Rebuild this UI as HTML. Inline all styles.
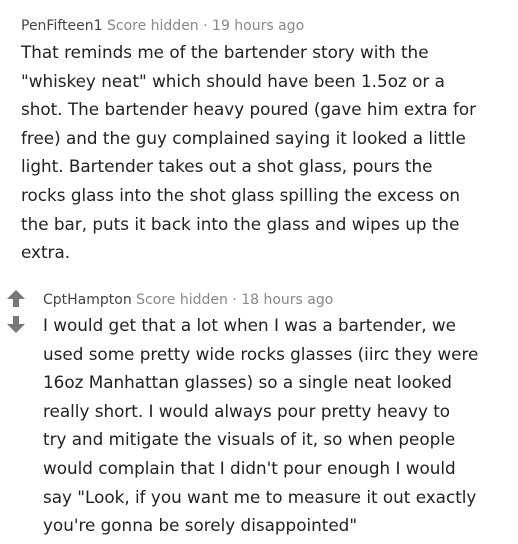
<!DOCTYPE html>
<html><head><style>
body{margin:0;background:#fff;width:518px;height:544px;overflow:hidden;font-family:"DejaVu Sans",sans-serif;}
.h{position:absolute;font-size:14px;color:#888;white-space:nowrap;line-height:16px}
.h b{font-weight:normal;color:#444}
.t{position:absolute;font-size:16.8px;line-height:28.6px;color:#222;}
.t div{white-space:nowrap}
</style></head><body>
<div class="h" style="left:21px;top:18px"><b>PenFifteen1</b> Score hidden · 19 hours ago</div>
<div class="t" style="left:21px;top:38px">
<div>That reminds me of the bartender story with the</div>
<div>"whiskey neat" which should have been 1.5oz or a</div>
<div>shot. The bartender heavy poured (gave him extra for</div>
<div>free) and the guy complained saying it looked a little</div>
<div>light. Bartender takes out a shot glass, pours the</div>
<div>rocks glass into the shot glass spilling the excess on</div>
<div>the bar, puts it back into the glass and wipes up the</div>
<div>extra.</div>
</div>
<svg style="position:absolute;left:7px;top:290px" width="20" height="44" viewBox="0 0 20 44">
<path d="M9 0 L18 9 L12 9 L12 17 L6 17 L6 9 L0 9Z" fill="#777"/>
<path d="M6 26 L12 26 L12 34 L18 34 L9 43 L0 34 L6 34Z" fill="#777"/>
</svg>
<div class="h" style="left:43px;top:292px"><b>CptHampton</b> Score hidden · 18 hours ago</div>
<div class="t" style="left:43px;top:311px">
<div>I would get that a lot when I was a bartender, we</div>
<div>used some pretty wide rocks glasses (iirc they were</div>
<div>16oz Manhattan glasses) so a single neat looked</div>
<div>really short. I would always pour pretty heavy to</div>
<div>try and mitigate the visuals of it, so when people</div>
<div>would complain that I didn't pour enough I would</div>
<div>say "Look, if you want me to measure it out exactly</div>
<div>you're gonna be sorely disappointed"</div>
</div>
</body></html>
